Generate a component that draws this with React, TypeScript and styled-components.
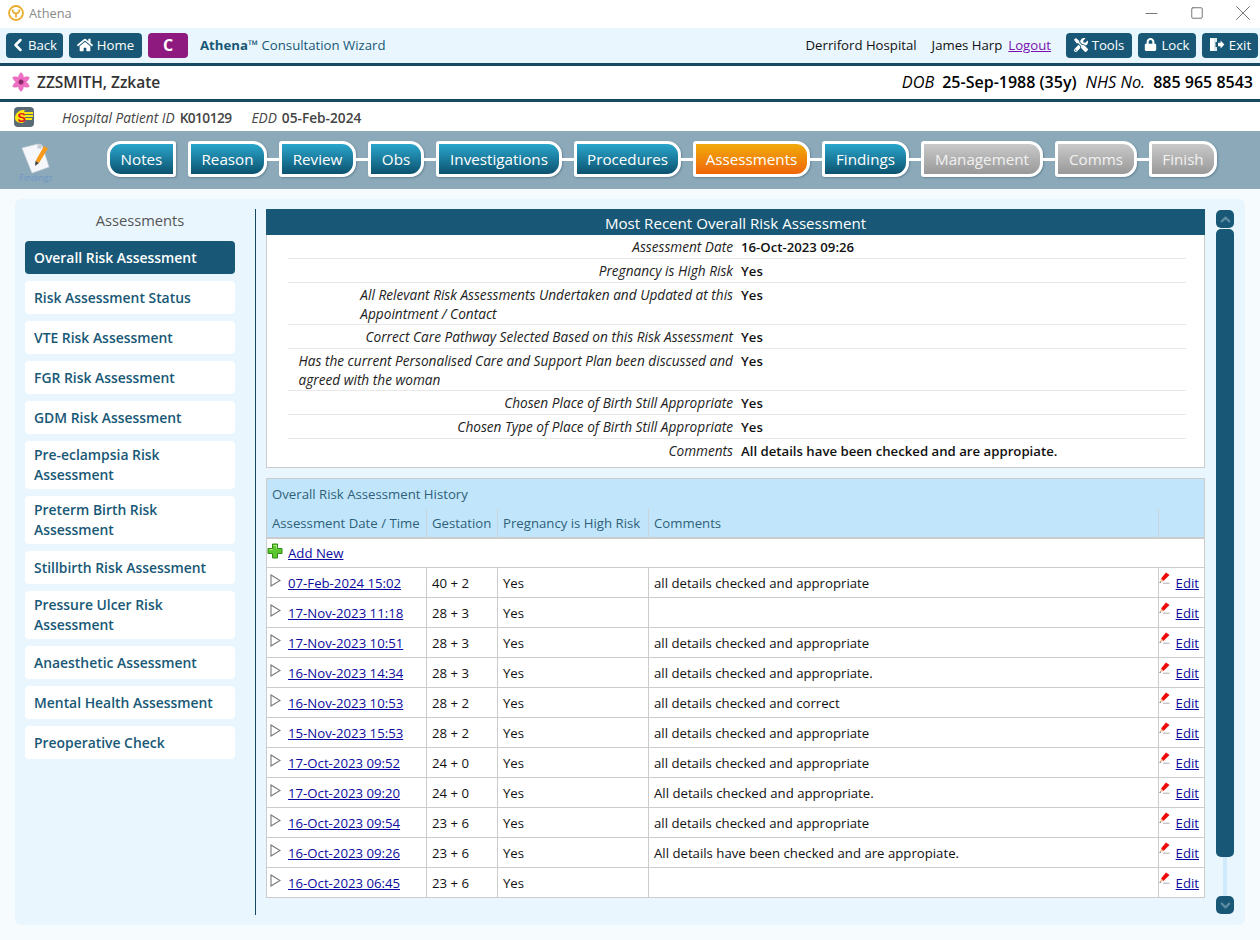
import React, { FC } from 'react';
import styled, { createGlobalStyle } from 'styled-components';
import { ChevronLeft, ChevronUp, ChevronDown, Minus, Square, X } from 'lucide-react';
import { FaHome, FaLock, FaTools } from 'react-icons/fa';

const NAVY = '#185876';
const DARK_RULE = '#174a60';
const FONT = '"Open Sans", "Noto Sans", sans-serif';

const Global = createGlobalStyle`
  html, body { margin: 0; padding: 0; background: #f6fbfe; }
  body { font-family: ${FONT}; font-size: 13.2px; color: #111; overflow: hidden; }
  * { box-sizing: border-box; }
`;

const Page = styled.div`
  width: 1260px;
  height: 940px;
  display: flex;
  flex-direction: column;
  overflow: hidden;
`;

const TitleBar = styled.div`
  height: 28px;
  background: #fff;
  display: flex;
  align-items: center;
  padding: 0 0 2px 8px;
  color: #8a8a8a;
  font-size: 12.8px;
  gap: 5px;
`;
const WindowControls = styled.div`
  margin-left: auto;
  margin-right: -6px;
  display: flex;
  align-items: center;
  color: #777;
`;
const WindowButton = styled.div`
  width: 46px;
  height: 24px;
  display: flex;
  align-items: center;
  justify-content: center;
`;

const Toolbar = styled.div`
  height: 38px;
  background: #e9f6fe;
  border-bottom: 3px solid ${DARK_RULE};
  display: flex;
  align-items: center;
  padding: 0 2px 0 6px;
  gap: 6px;
`;
const ToolButton = styled.div<{ $w: number; $purple?: boolean; $tight?: boolean }>`
  width: ${p => p.$w}px;
  height: 25px;
  border-radius: 4px;
  background: ${p => (p.$purple ? '#8e1a80' : NAVY)};
  color: #fff;
  display: flex;
  align-items: center;
  justify-content: center;
  gap: ${p => (p.$tight ? 0 : 4)}px;
  padding-bottom: 2px;
  padding-right: ${p => (p.$tight ? 4 : 0)}px;
  font-size: ${p => (p.$purple ? '16px' : '13.2px')};
  font-weight: ${p => (p.$purple ? 700 : 400)};
`;
const AppTitle = styled.div`
  margin-left: 6px;
  padding-bottom: 2px;
  color: ${NAVY};
  font-size: 13.2px;
  b { font-weight: 700; }
`;
const UserInfo = styled.div`
  margin-left: auto;
  padding-bottom: 2px;
  display: flex;
  align-items: center;
  color: #111;
  font-size: 13.2px;
  margin-right: 9px;
`;
const Logout = styled.a`
  color: #7a10b0;
  text-decoration: underline;
  margin-left: 6px;
`;
const Site = styled.span`
  margin-right: 15px;
`;

const PatientRow = styled.div`
  height: 36px;
  background: #fff;
  border-bottom: 3px solid ${DARK_RULE};
  display: flex;
  align-items: center;
  padding: 0 7px 2px 11px;
  font-size: 15.5px;
`;
const PatientName = styled.div`
  margin-left: 6px;
  font-weight: 600;
  color: #333;
`;
const PatientMeta = styled.div`
  margin-left: auto;
  color: #000;
  white-space: nowrap;
  i { font-weight: 400; font-size: 16.3px; margin-right: 8px; }
  b { font-weight: 600; font-size: 16px; margin-right: 9px; }
  b:last-child { margin-right: 0; }
`;

const AlertRow = styled.div`
  height: 29px;
  background: #fff;
  display: flex;
  align-items: center;
  padding-left: 14px;
  color: #444;
  font-size: 13.7px;
  i { font-weight: 400; margin-right: 5px; }
  b { font-weight: 600; margin-right: 20px; }
  b:first-of-type { letter-spacing: -0.55px; }
`;
const AlertFields = styled.div`
  margin-left: 28px;
  padding-top: 1px;
`;

const Wizard = styled.div`
  height: 58px;
  background: #8ba9b9;
  display: flex;
  align-items: center;
  padding: 0 0 2px 19px;
`;
const WizardIcon = styled.div`
  width: 34px;
  margin-right: 54px;
  display: flex;
  flex-direction: column;
  align-items: center;
  color: #6f96c8;
  font-size: 8.5px;
  line-height: 10px;
  margin-top: 6px;
`;
const Step = styled.div<{ $w: number; $tone: 'blue' | 'orange' | 'grey'; $first?: boolean }>`
  width: ${p => p.$w}px;
  height: 36px;
  border: 3px solid #fff;
  border-radius: ${p => (p.$first ? '14px 3px 3px 14px' : '3px 14px 14px 3px')};
  box-shadow: 1px 1px 2px rgba(40, 70, 90, 0.35);
  display: flex;
  align-items: center;
  justify-content: center;
  padding-bottom: 1px;
  font-size: 15.2px;
  background: ${p =>
    p.$tone === 'orange'
      ? 'linear-gradient(#f0ab0a, #f0660a)'
      : p.$tone === 'grey'
        ? 'linear-gradient(#c9c9c9, #999)'
        : 'linear-gradient(#2aa6cc, #0c526f)'};
  color: ${p => (p.$tone === 'grey' ? '#f1f1f1' : '#fff')};
`;
const StepLink = styled.div<{ $hidden?: boolean }>`
  width: 12px;
  height: 3px;
  background: ${p => (p.$hidden ? 'transparent' : '#fff')};
`;

const Body = styled.div`
  flex: 1;
  padding: 10px 15px 15px;
  display: flex;
  min-height: 0;
`;
const Panel = styled.div`
  flex: 1;
  background: #e9f6fe;
  border-radius: 6px;
  padding: 10px 11px 10px 10px;
  display: grid;
  grid-template-columns: 210px 1fr 18px;
  column-gap: 11px;
`;

const Sidebar = styled.div`
  display: flex;
  flex-direction: column;
  gap: 7px;
`;
const SidebarTitle = styled.div`
  height: 25px;
  padding-left: 20px;
  text-align: center;
  color: #555;
  font-size: 14.7px;
  line-height: 22px;
`;
const SideItem = styled.div<{ $active?: boolean }>`
  min-height: 33px;
  padding: 4px 9px;
  line-height: 20px;
  border-radius: 4px;
  display: flex;
  align-items: center;
  font-weight: 600;
  font-size: 13.9px;
  background: ${p => (p.$active ? NAVY : '#fff')};
  color: ${p => (p.$active ? '#fff' : NAVY)};
`;

const Content = styled.div`
  margin-left: 9px;
  border-left: 1px solid ${DARK_RULE};
  padding-left: 10px;
  display: flex;
  flex-direction: column;
  gap: 10px;
  min-width: 0;
`;
const Summary = styled.section`
  background: #fff;
  border: 1px solid #ccc;
  border-top: none;
`;
const SummaryTitle = styled.h2`
  margin: 0 -1px;
  height: 26px;
  background: ${NAVY};
  color: #fff;
  font-weight: 400;
  font-size: 15.1px;
  line-height: 28px;
  text-align: center;
`;
const SummaryRows = styled.div`
  padding: 0 18px 0 21px;
`;
const SummaryRow = styled.div`
  min-height: 24px;
  padding: 3px 0 1px;
  display: grid;
  grid-template-columns: 445px 1fr;
  column-gap: 8px;
  line-height: 18.5px;
  border-bottom: 1px solid #e8e8e8;
  &:last-child { border-bottom: none; padding-bottom: 6.5px; }
`;
const RowLabel = styled.div`
  font-style: italic;
  color: #222;
  display: flex;
  justify-content: flex-end;
  white-space: nowrap;
  font-size: 13.65px;
`;
const RowValue = styled.div`
  font-weight: 600;
  color: #111;
  font-size: 13.2px;
`;

const History = styled.table`
  width: 938px;
  table-layout: fixed;
  border-collapse: collapse;
  background: #fff;
  font-size: 13.2px;
`;
const Caption = styled.th`
  height: 30px;
  background: #c1e6fc;
  color: #2f5f78;
  font-weight: 400;
  text-align: left;
  padding: 0 5px;
  border: 1px solid #ccc;
  border-bottom: none;
`;
const HeadCell = styled.th`
  height: 29px;
  background: #c1e6fc;
  color: #2f5f78;
  font-weight: 400;
  text-align: left;
  padding: 0 5px;
  border-left: 1px solid #c9d5dd;
  border-bottom: 2px solid #ccc;
  white-space: nowrap;
  &:first-child { border-left: 1px solid #ccc; }
  &:last-child { border-right: 1px solid #ccc; }
`;
const Cell = styled.td`
  height: 30px;
  padding: 0 5px;
  border: 1px solid #ccc;
  white-space: nowrap;
  color: #111;
`;
const CellRow = styled.div`
  display: flex;
  align-items: center;
`;
const Anchor = styled.a`
  color: #0a0a9e;
  text-decoration: underline;
`;
const TriangleBox = styled.span`
  width: 18px;
  display: inline-flex;
  margin: -5px 0 0 -2px;
`;
const PencilBox = styled.span`
  width: 17px;
  display: inline-flex;
  margin: -9px 0 0 -5px;
`;
const PlusBox = styled.span`
  display: inline-flex;
  margin: -4px 5px 0 -5px;
`;

const Scroller = styled.div`
  display: flex;
  flex-direction: column;
  align-items: center;
  padding-top: 1px;
  height: 705px;
`;
const ScrollEnd = styled.div`
  width: 18px;
  height: 18px;
  border-radius: 5px;
  background: ${NAVY};
  color: #5f8ba2;
  display: flex;
  align-items: center;
  justify-content: center;
  flex: none;
`;
const ScrollThumb = styled.div`
  width: 18px;
  height: 628px;
  margin-top: 1px;
  background: ${NAVY};
  border-radius: 5px;
  flex: none;
`;
const ScrollTrack = styled.div`
  width: 4px;
  flex: 1;
  background: #cfeafa;
`;

const AppLogo: FC = () => (
  <svg width="16" height="16" viewBox="0 0 16 16">
    <circle cx="8" cy="8" r="7" fill="#fff" stroke="#e8ae2c" strokeWidth="1.8" />
    <path d="M4.500 4.500c.2 2.600 1.400 3.800 3.500 4 2.100-.2 3.300-1.400 3.500-4M8 8.500v4" fill="none" stroke="#e8ae2c" strokeWidth="1.800" />
  </svg>
);

const ExitIcon: FC = () => (
  <svg width="16" height="15" viewBox="0 0 16 15">
    <path d="M1 1h7v4H6.500v5H8v4H1z" fill="#dfe9ee" />
    <path d="M1 1l4 1.500v11L1 14z" fill="#fff" />
    <path d="M9 5.800h2.600V3.400L15.400 7.500l-3.800 4V9.200H9z" fill="#fff" />
  </svg>
);

const Flower: FC = () => (
  <svg width="20" height="20" viewBox="0 0 20 20">
    {[0, 60, 120, 180, 240, 300].map(a => (
      <path key={a} d="M10 10C6.500 7 7 3 10 .5c3 2.500 3.500 6.500 0 9.500z" fill="#f06fc4" stroke="#d85aa8" strokeWidth="0.4" transform={`rotate(${a} 10 10)`} />
    ))}
    <circle cx="10" cy="10" r="2.500" fill="#8e2a6c" />
  </svg>
);

const AlertLogo: FC = () => (
  <svg width="20" height="20" viewBox="0 0 20 20">
    <rect width="20" height="20" rx="4" fill="#5b6b76" />
    <path d="M1 11c0-4 3-7 7-8h3l-1 2h9v2h-8v1h8v2h-8v1h7v2h-7l-2 3c-4 0-8-1-8-5z" fill="#fbe812" />
    <text x="3.500" y="15" fontSize="12.500" fontWeight="700" fontFamily="Liberation Sans, sans-serif" fill="#e0141c">S</text>
  </svg>
);

const NoteIcon: FC = () => (
  <svg width="34" height="32" viewBox="0 0 34 32">
    <path d="M3 7 19 3l4 1 7 22-17 6z" fill="#f5f7fb" stroke="#cfd6de" strokeWidth="0.6" />
    <path d="M19 3l4 1-1 4-4-1z" fill="#c9ced6" />
    <path d="M25 5l4 2.500L20 22l-3.500-2z" fill="#f59a1c" />
    <path d="M16.500 20l-.5 5 4-3z" fill="#444" />
  </svg>
);

const PlusIcon: FC = () => (
  <svg width="16" height="16" viewBox="0 0 16 16">
    <path d="M5.500 1h5v4.500H15v5h-4.500V15h-5v-4.500H1v-5h4.500z" fill="#5cc82e" stroke="#2f8a18" strokeWidth="1" strokeLinejoin="round" />
    <path d="M6.500 2.500h3v3M2.500 6.500h3" fill="none" stroke="#b6ee8c" strokeWidth="1" />
  </svg>
);

const Triangle: FC = () => (
  <svg width="11" height="13" viewBox="0 0 11 13">
    <path d="M1 1l9 5.500L1 12z" fill="#fff" stroke="#777" strokeWidth="1.100" />
  </svg>
);

const RedPencil: FC = () => (
  <svg width="11" height="12" viewBox="0 0 11 12">
    <path d="M7 .5 10.500 3 4.500 9 2 6.500z" fill="#ee0a0a" />
    <path d="M2 6.500 4.500 9 1.200 10z" fill="#f2b28a" />
    <path d="M.3 10.800l1-1.200.7.800z" fill="#111" />
    <path d="M4 11.200h6.500" stroke="#999" strokeWidth="0.800" />
  </svg>
);

type StepDef = { label: string; w: number; tone: 'blue' | 'orange' | 'grey' };
const steps: StepDef[] = [
  { label: 'Notes', w: 69, tone: 'blue' },
  { label: 'Reason', w: 79, tone: 'blue' },
  { label: 'Review', w: 77, tone: 'blue' },
  { label: 'Obs', w: 56, tone: 'blue' },
  { label: 'Investigations', w: 126, tone: 'blue' },
  { label: 'Procedures', w: 107, tone: 'blue' },
  { label: 'Assessments', w: 117, tone: 'orange' },
  { label: 'Findings', w: 87, tone: 'blue' },
  { label: 'Management', w: 122, tone: 'grey' },
  { label: 'Comms', w: 82, tone: 'grey' },
  { label: 'Finish', w: 68, tone: 'grey' },
];

const sideItems = [
  'Overall Risk Assessment',
  'Risk Assessment Status',
  'VTE Risk Assessment',
  'FGR Risk Assessment',
  'GDM Risk Assessment',
  'Pre-eclampsia Risk Assessment',
  'Preterm Birth Risk Assessment',
  'Stillbirth Risk Assessment',
  'Pressure Ulcer Risk Assessment',
  'Anaesthetic Assessment',
  'Mental Health Assessment',
  'Preoperative Check',
];

const history = [
  ['07-Feb-2024 15:02', '40 + 2', 'all details checked and appropriate'],
  ['17-Nov-2023 11:18', '28 + 3', ''],
  ['17-Nov-2023 10:51', '28 + 3', 'all details checked and appropriate'],
  ['16-Nov-2023 14:34', '28 + 3', 'all details checked and appropriate.'],
  ['16-Nov-2023 10:53', '28 + 2', 'all details checked and correct'],
  ['15-Nov-2023 15:53', '28 + 2', 'all details checked and appropriate'],
  ['17-Oct-2023 09:52', '24 + 0', 'all details checked and appropriate'],
  ['17-Oct-2023 09:20', '24 + 0', 'All details checked and appropriate.'],
  ['16-Oct-2023 09:54', '23 + 6', 'all details checked and appropriate'],
  ['16-Oct-2023 09:26', '23 + 6', 'All details have been checked and are appropiate.'],
  ['16-Oct-2023 06:45', '23 + 6', ''],
];

const App: FC = () => (
  <Page>
    <Global />
    <TitleBar>
      <AppLogo />
      Athena
      <WindowControls>
        <WindowButton><Minus size={19} strokeWidth={1} absoluteStrokeWidth /></WindowButton>
        <WindowButton><Square size={14} strokeWidth={1} absoluteStrokeWidth /></WindowButton>
        <WindowButton><X size={26} strokeWidth={1} absoluteStrokeWidth /></WindowButton>
      </WindowControls>
    </TitleBar>

    <Toolbar>
      <ToolButton $w={57} $tight><ChevronLeft size={20} strokeWidth={3} />Back</ToolButton>
      <ToolButton $w={73}><FaHome size={16} />Home</ToolButton>
      <ToolButton $w={40} $purple>C</ToolButton>
      <AppTitle><b>Athena™</b> Consultation Wizard</AppTitle>
      <UserInfo>
        <Site>Derriford Hospital</Site>
        James Harp
        <Logout>Logout</Logout>
      </UserInfo>
      <ToolButton $w={66}><FaTools size={14} />Tools</ToolButton>
      <ToolButton $w={58}><FaLock size={13} />Lock</ToolButton>
      <ToolButton $w={56}><ExitIcon />Exit</ToolButton>
    </Toolbar>

    <PatientRow>
      <Flower />
      <PatientName>ZZSMITH, Zzkate</PatientName>
      <PatientMeta>
        <i>DOB</i><b>25-Sep-1988 (35y)</b>
        <i>NHS No.</i><b>885 965 8543</b>
      </PatientMeta>
    </PatientRow>

    <AlertRow>
      <AlertLogo />
      <AlertFields>
        <i>Hospital Patient ID</i><b>K010129</b>
        <i>EDD</i><b>05-Feb-2024</b>
      </AlertFields>
    </AlertRow>

    <Wizard>
      <WizardIcon><NoteIcon />Findings</WizardIcon>
      {steps.map((s, i) => (
        <React.Fragment key={s.label}>
          {i > 0 && <StepLink $hidden={i === 1} />}
          <Step $w={s.w} $tone={s.tone} $first={i === 0}>{s.label}</Step>
        </React.Fragment>
      ))}
    </Wizard>

    <Body>
      <Panel>
        <Sidebar>
          <SidebarTitle>Assessments</SidebarTitle>
          {sideItems.map((item, i) => (
            <SideItem key={item} $active={i === 0}>{item}</SideItem>
          ))}
        </Sidebar>

        <Content>
          <Summary>
            <SummaryTitle>Most Recent Overall Risk Assessment</SummaryTitle>
            <SummaryRows>
              <SummaryRow><RowLabel>Assessment Date</RowLabel><RowValue>16-Oct-2023 09:26</RowValue></SummaryRow>
              <SummaryRow><RowLabel>Pregnancy is High Risk</RowLabel><RowValue>Yes</RowValue></SummaryRow>
              <SummaryRow>
                <RowLabel><span>All Relevant Risk Assessments Undertaken and Updated at this<br />Appointment / Contact</span></RowLabel>
                <RowValue>Yes</RowValue>
              </SummaryRow>
              <SummaryRow><RowLabel>Correct Care Pathway Selected Based on this Risk Assessment</RowLabel><RowValue>Yes</RowValue></SummaryRow>
              <SummaryRow>
                <RowLabel><span>Has the current Personalised Care and Support Plan been discussed and<br />agreed with the woman</span></RowLabel>
                <RowValue>Yes</RowValue>
              </SummaryRow>
              <SummaryRow><RowLabel>Chosen Place of Birth Still Appropriate</RowLabel><RowValue>Yes</RowValue></SummaryRow>
              <SummaryRow><RowLabel>Chosen Type of Place of Birth Still Appropriate</RowLabel><RowValue>Yes</RowValue></SummaryRow>
              <SummaryRow><RowLabel>Comments</RowLabel><RowValue>All details have been checked and are appropiate.</RowValue></SummaryRow>
            </SummaryRows>
          </Summary>

          <History>
            <colgroup>
              <col width="160" /><col width="71" /><col width="151" /><col width="510" /><col width="46" />
            </colgroup>
            <thead>
              <tr><Caption colSpan={5}>Overall Risk Assessment History</Caption></tr>
              <tr>
                <HeadCell>Assessment Date / Time</HeadCell>
                <HeadCell>Gestation</HeadCell>
                <HeadCell>Pregnancy is High Risk</HeadCell>
                <HeadCell>Comments</HeadCell>
                <HeadCell />
              </tr>
            </thead>
            <tbody>
              <tr>
                <Cell colSpan={5}>
                  <CellRow><PlusBox><PlusIcon /></PlusBox><Anchor>Add New</Anchor></CellRow>
                </Cell>
              </tr>
              {history.map(([date, gest, comment]) => (
                <tr key={date}>
                  <Cell><CellRow><TriangleBox><Triangle /></TriangleBox><Anchor>{date}</Anchor></CellRow></Cell>
                  <Cell>{gest}</Cell>
                  <Cell>Yes</Cell>
                  <Cell>{comment}</Cell>
                  <Cell><CellRow><PencilBox><RedPencil /></PencilBox><Anchor>Edit</Anchor></CellRow></Cell>
                </tr>
              ))}
            </tbody>
          </History>
        </Content>

        <Scroller>
          <ScrollEnd><ChevronUp size={15} strokeWidth={3.5} /></ScrollEnd>
          <ScrollThumb />
          <ScrollTrack />
          <ScrollEnd><ChevronDown size={15} strokeWidth={3.5} /></ScrollEnd>
        </Scroller>
      </Panel>
    </Body>
  </Page>
);

export default App;
